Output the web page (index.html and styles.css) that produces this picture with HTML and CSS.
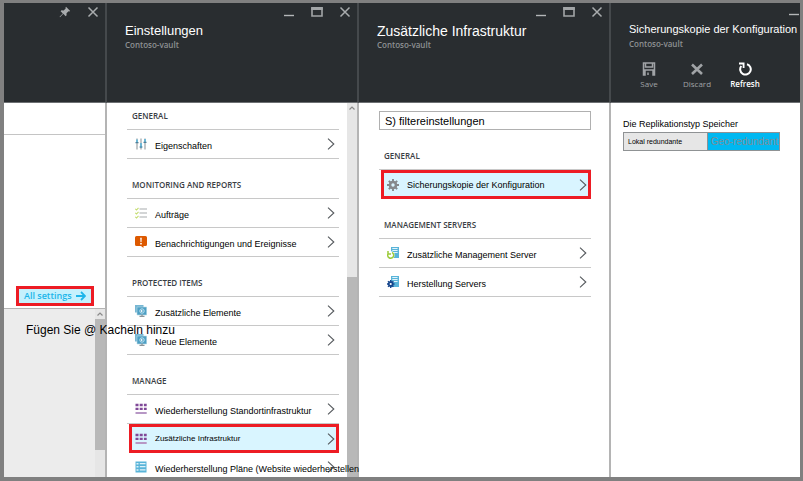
FILE: index.html
```html
<!DOCTYPE html>
<html lang="de">
<head>
<meta charset="utf-8">
<title>Contoso-vault</title>
<link rel="stylesheet" href="styles.css">
</head>
<body>
<svg class="defs" aria-hidden="true">
  <symbol id="close" viewBox="0 0 12 12"><path d="M1.500 1.500l9 9M10.500 1.500l-9 9" fill="none" stroke="#a9acae" stroke-width="1.500"/></symbol>
  <symbol id="min" viewBox="0 0 12 12"><path d="M1 9.500h10" stroke="#b4b6b8" stroke-width="1.400"/></symbol>
  <symbol id="max" viewBox="0 0 12 12"><path d="M1 2h10v8H1z" fill="none" stroke="#a2a5a7" stroke-width="1.600"/><path d="M.2 1h11.600v3H.2z" fill="#a2a5a7"/></symbol>
  <symbol id="pin" viewBox="0 0 12 12"><path d="M7 .8l4.200 4.200-1 .5-.7-.2-2 2 .1 2-.9.9-2.400-2.400L1 11.200l-.4-.4 3.200-3.400L1.600 5.200l.9-.9 2.200.2 2-2-.2-.8z" fill="#a9acae"/></symbol>
  <symbol id="chev" viewBox="0 0 8 12"><path d="M1 .7L6.800 6 1 11.300" fill="none" stroke="#55595d" stroke-width="1.100"/></symbol>
  <symbol id="up" viewBox="0 0 10 10"><path d="M2.500 6.500L5 4l2.500 2.500" fill="none" stroke="#8a8a8a" stroke-width="1.200"/></symbol>
  <symbol id="sliders" viewBox="0 0 12 12"><path d="M2 .5v11M6 .5v11M10 .5v11" stroke="#a3a9ad" stroke-width="1.300"/><path d="M2 1.500v3M6 5v5M10 1v3" stroke="#59b4d9" stroke-width="1.600"/><path d="M.5 4.700h3M4.500 9h3M8.500 4.300h3" stroke="#4d7f99" stroke-width="1.200"/></symbol>
  <symbol id="tasks" viewBox="0 0 12 12"><path d="M4.500 2H12M4.500 6H12M4.500 10H12" stroke="#a8abad" stroke-width="1.100"/><path d="M.3 1.800l1.200 1.200L3.500.8M.3 5.800L1.500 7l2-2.200M.3 9.800L1.500 11l2-2.200" fill="none" stroke="#c3dc6c" stroke-width="1.100"/></symbol>
  <symbol id="alert" viewBox="0 0 12 12"><path d="M1.500 0h9Q12 0 12 1.500v7Q12 10 10.500 10H8.500v2l-2.500-2H1.500Q0 10 0 8.500v-7Q0 0 1.500 0z" fill="#dd5900"/><path d="M5.200 1.800h1.600L6.500 6h-1z" fill="#fff"/><circle cx="6" cy="7.700" r=".9" fill="#fff"/></symbol>
  <symbol id="screens" viewBox="0 0 12 12"><path d="M0 0h8.500v7.500H0z" fill="#77b7d3"/><path d="M2 2h9.700v8H2z" fill="#4d9fc4" stroke="#b9dbe8" stroke-width=".6"/><path d="M4.500 11.500h5M7 9.500v2" stroke="#8b9499" stroke-width="1.300"/><circle cx="7" cy="6" r="2.200" fill="none" stroke="#bfe2f0"/><path d="M6 4.800l2 1.200-2 1.300z" fill="#fff"/></symbol>
  <symbol id="blocks" viewBox="0 0 12 12"><path d="M.5.8h3v2.400h-3zM4.700.8h3v2.400h-3zM8.900.8h2.800v2.400H8.900zM.5 4.700h3v2.400h-3zM4.700 4.700h3v2.400h-3zM8.900 4.700h2.800v2.400H8.900z" fill="#804998"/><path d="M.5 9h11.200v2H.5z" fill="#b797c5"/></symbol>
  <symbol id="plan" viewBox="0 0 12 12"><path d="M.5.500h11v11H.5z" fill="#59b4d9"/><path d="M1.500 2h2v1.500h-2zM1.500 5h2v1.500h-2zM1.500 8.300h2v1.500h-2zM4.800 2h5.700v1.300H4.800zM4.800 5h5.700v1.300H4.800zM4.800 8.300h5.700v1.300H4.800z" fill="#dff2f9"/></symbol>
  <symbol id="gear" viewBox="0 0 12 12"><circle cx="6" cy="6" r="3" fill="none" stroke="#85898c" stroke-width="2.600"/><path d="M6 0v2.500M6 9.500V12M0 6h2.500M9.500 6H12M1.800 1.800l1.700 1.700M8.500 8.500l1.700 1.700M1.800 10.200l1.700-1.700M8.500 3.500l1.700-1.700" stroke="#85898c" stroke-width="1.900"/></symbol>
  <symbol id="server" viewBox="0 0 12 12"><path d="M4 0h8v11H4z" fill="#59b4d9"/><path d="M5.300 1.500h5.300M5.300 3.500h5.300M5.300 5.500h5.300" stroke="#e2f4fb" stroke-width="1"/></symbol>
</svg>
<main class="portal">
  <section class="blade blade-vault">
    <header class="blade-head">
      <div class="window">
        <button type="button" aria-label="Anheften"><svg><use href="#pin"/></svg></button>
        <button type="button" aria-label="Schließen"><svg><use href="#close"/></svg></button>
      </div>
    </header>
    <div class="vault-summary">
      <div class="vault-strip"></div>
      <a class="all-settings" href="#settings">All settings
        <svg viewBox="0 0 10 10"><path d="M0 5h9M5 1l4 4-4 4" fill="none" stroke="#1cb5ea" stroke-width="1.800"/></svg>
      </a>
    </div>
    <div class="vault-tiles">
      <p>Fügen Sie @ Kacheln hinzu</p>
      <div class="scroll scroll-tiles"><svg><use href="#up"/></svg><i></i></div>
    </div>
  </section>

  <section class="blade blade-settings" id="settings">
    <header class="blade-head">
      <div class="window">
        <button type="button" aria-label="Minimieren"><svg><use href="#min"/></svg></button>
        <button type="button" aria-label="Maximieren"><svg><use href="#max"/></svg></button>
        <button type="button" aria-label="Schließen"><svg><use href="#close"/></svg></button>
      </div>
      <h1>Einstellungen</h1>
      <p>Contoso-vault</p>
    </header>
    <div class="blade-body">
      <nav class="menu">
        <h2>GENERAL</h2>
        <a href="#"><svg><use href="#sliders"/></svg><span>Eigenschaften</span><svg class="chev"><use href="#chev"/></svg></a>
        <h2>MONITORING AND REPORTS</h2>
        <a href="#"><svg><use href="#tasks"/></svg><span>Aufträge</span><svg class="chev"><use href="#chev"/></svg></a>
        <a href="#"><svg><use href="#alert"/></svg><span>Benachrichtigungen und Ereignisse</span><svg class="chev"><use href="#chev"/></svg></a>
        <h2>PROTECTED ITEMS</h2>
        <a href="#"><svg><use href="#screens"/></svg><span>Zusätzliche Elemente</span><svg class="chev"><use href="#chev"/></svg></a>
        <a href="#"><svg><use href="#screens"/></svg><span>Neue Elemente</span><svg class="chev"><use href="#chev"/></svg></a>
        <h2>MANAGE</h2>
        <a href="#"><svg><use href="#blocks"/></svg><span>Wiederherstellung Standortinfrastruktur</span><svg class="chev"><use href="#chev"/></svg></a>
        <a href="#" class="selected small"><svg><use href="#blocks"/></svg><span>Zusätzliche Infrastruktur</span><svg class="chev"><use href="#chev"/></svg></a>
        <a href="#"><svg><use href="#plan"/></svg><span>Wiederherstellung Pläne (Website wiederherstellen</span><svg class="chev"><use href="#chev"/></svg></a>
      </nav>
      <div class="scroll scroll-settings"><svg><use href="#up"/></svg><i></i></div>
    </div>
  </section>

  <section class="blade blade-infra">
    <header class="blade-head">
      <div class="window">
        <button type="button" aria-label="Minimieren"><svg><use href="#min"/></svg></button>
        <button type="button" aria-label="Maximieren"><svg><use href="#max"/></svg></button>
        <button type="button" aria-label="Schließen"><svg><use href="#close"/></svg></button>
      </div>
      <h1>Zusätzliche Infrastruktur</h1>
      <p>Contoso-vault</p>
    </header>
    <div class="blade-body infra">
      <input class="filter" type="text" value="S) filtereinstellungen" aria-label="Filtereinstellungen">
      <nav class="menu">
        <h2>GENERAL</h2>
        <a href="#" class="selected"><svg><use href="#gear"/></svg><span>Sicherungskopie der Konfiguration</span><svg class="chev"><use href="#chev"/></svg></a>
        <h2>MANAGEMENT SERVERS</h2>
        <a href="#"><svg viewBox="0 0 12 12"><use href="#server"/><circle cx="3.800" cy="8" r="3.800" fill="#fff"/><path d="M1.200 6.500A3 3 0 1 0 5 5.500M1 4v3h3" fill="none" stroke="#9ccb3b" stroke-width="1.500"/></svg><span>Zusätzliche Management Server</span><svg class="chev"><use href="#chev"/></svg></a>
        <a href="#"><svg viewBox="0 0 12 12"><use href="#server"/><circle cx="3.700" cy="8" r="2" fill="#fff" stroke="#16458c" stroke-width="1.800"/><path d="M3.700 4v1.500M3.700 10.500V12M0 8h1.200M6.200 8h1.300M1 5.300l1 1M5.400 9.700l1 1M1 10.700l1-1M5.400 6.300l1-1" stroke="#16458c" stroke-width="1.400"/></svg><span>Herstellung Servers</span><svg class="chev"><use href="#chev"/></svg></a>
      </nav>
    </div>
  </section>

  <section class="blade blade-config">
    <header class="blade-head">
      <div class="window">
        <button type="button" aria-label="Minimieren"><svg><use href="#min"/></svg></button>
      </div>
      <h1>Sicherungskopie der Konfiguration</h1>
      <p>Contoso-vault</p>
      <div class="commands">
        <button type="button"><svg viewBox="0 0 14 14"><path d="M1.500 1h11v12h-1.500V8H3v5H1.500zM3.500 1v4h7V1M6 10.500v2.500" fill="none" stroke="#a0a3a6" stroke-width="1.500"/></svg>Save</button>
        <button type="button"><svg viewBox="0 0 14 14"><path d="M2 2.500l10 9.500M12 2.500L2 12" stroke="#a0a3a6" stroke-width="2.600"/></svg>Discard</button>
        <button type="button" class="on"><svg viewBox="0 0 14 14"><path d="M9 2.200A5.300 5.300 0 1 1 3.300 4" fill="none" stroke="#fff" stroke-width="2"/><path d="M1 1.500h4.600v4.600" fill="none" stroke="#fff" stroke-width="1.800"/></svg>Refresh</button>
      </div>
    </header>
    <div class="replication" role="group" aria-labelledby="rep">
      <div id="rep">Die Replikationstyp Speicher</div>
      <div class="toggle"><button type="button">Lokal redundante</button><button type="button" class="active" aria-pressed="true">Geo-redundant</button></div>
    </div>
  </section>
</main>
</body>
</html>
```
FILE: styles.css
```css
* { box-sizing: border-box; }
body { margin: 0; font-family: "Liberation Sans", Arial, sans-serif; font-size: 9px; color: #000; }
h1, h2, p { margin: 0; font-weight: 400; }
a { color: inherit; text-decoration: none; }
button { margin: 0; padding: 0; border: 0; background: none; font: inherit; color: inherit; }
svg { display: block; flex: none; width: 12px; height: 12px; }
.defs { display: none; }

.portal {
  display: grid;
  grid-template-columns: 103fr 252fr 252fr 189fr;
  height: 100vh;
  border: solid #808080;
  border-width: 3px 3px 4px 4px;
  overflow: hidden;
  background: #fff;
}
.blade {
  position: relative;
  display: flex;
  flex-direction: column;
  min-width: 0;
  min-height: 0;
  border-right: 2px solid #b4b4b4;
}
.blade-vault { z-index: 2; }
.blade-settings { z-index: 1; }
.blade-config { border-right: 0; }

.blade-head {
  flex: none;
  height: 100px;
  margin-right: -2px;
  padding-left: 18px;
  border-right: 2px solid #45494c;
  border-bottom: 1px solid #6d7073;
  background: #292d30;
  color: #fff;
}
.window { display: flex; justify-content: flex-end; gap: 16px; height: 18px; padding-right: 6px; }
.blade-head h1 { font-size: 13px; line-height: 20px; white-space: nowrap; }
.blade-head p { font: 600 8px/8px "Open Sans", sans-serif; color: #8e9193; }
.blade-infra h1 { font-size: 14px; }
.blade-config .blade-head { margin-right: 0; border-right: 0; }
.blade-config .window { height: 16px; padding-right: 0; }
.blade-config h1 { font-size: 11px; }
.blade-config p { padding-top: 1px; }
.commands { display: flex; margin-top: 14px; }
.commands button { display: flex; flex-direction: column; align-items: center; gap: 3px; width: 48px; margin-left: -4px; margin-right: 4px; font: 8px/10px "Open Sans", sans-serif; color: #a0a3a6; }
.commands svg { width: 14px; height: 14px; }
.commands .on { color: #fff; font-weight: 600; }

.vault-summary { display: flex; flex-direction: column; justify-content: space-between; height: 206px; border-bottom: 1px solid #b4b4b4; }
.vault-strip { height: 32px; border-bottom: 1px solid #c4c4c4; }
.all-settings {
  display: flex;
  align-items: center;
  gap: 4px;
  align-self: flex-start;
  height: 20px;
  margin: 0 12px 2px;
  padding: 0 5px;
  border: 3px solid #ed1c24;
  background: #c5f1fd;
  font: 600 9px/14px "Open Sans", sans-serif;
  color: #1cb5ea;
  white-space: nowrap;
}
.all-settings svg { width: 10px; height: 10px; }
.vault-tiles { flex: 1; display: flex; justify-content: space-between; min-height: 0; background: #ececec; }
.vault-tiles p { width: 0; padding: 13px 0 0 22px; font-size: 12px; line-height: 16px; white-space: nowrap; z-index: 1; }

.scroll { flex: none; width: 10px; background: #e6e6e6; }
.scroll svg { width: 10px; height: 10px; }
.scroll i { display: block; background: #b8b8b8; }
.scroll-tiles i { height: calc(84% - 10px); }
.scroll-settings { display: flex; flex-direction: column; justify-content: space-between; }
.scroll-settings i { height: 200px; }

.blade-body { flex: 1; display: flex; min-height: 0; }
.menu { flex: 1; min-width: 0; padding: 0 8px 0 20px; }
.menu h2 {
  display: flex;
  align-items: flex-end;
  height: 40px;
  padding: 0 5px 7px;
  border-bottom: 1px solid #c8c8c8;
  font: 600 8px/12px "Open Sans", sans-serif;
  color: #3a3e44;
}
.blade-settings h2:first-child { height: 27px; }
.menu a { display: flex; align-items: center; gap: 8px; height: 29px; padding: 0 4px 0 8px; border-bottom: 1px solid #c8c8c8; }
.menu span { flex: 1; min-width: 0; padding-top: 3px; white-space: nowrap; z-index: 1; }
.menu .chev { width: 8px; }
.menu .selected { border: 3px solid #ed1c24; margin-left: 2px; padding: 0 1px 0 3px; background: #d9f5ff; }
.menu .selected span { padding-top: 0; }
.menu .small { font-size: 8px; }

.infra { flex-direction: column; padding-top: 8px; }
.filter { flex: none; height: 19px; margin: 0 18px 0 20px; padding: 0 5px; border: 1px solid #b0b0b0; font: 11px/16px "Liberation Sans", sans-serif; color: #000; }
.infra .menu { padding-right: 18px; }

.replication { padding: 14px 20px 0 12px; }
.replication > div:first-child { line-height: 15px; }
.toggle { display: flex; border: 1px solid #8f9294; height: 19px; }
.toggle button { flex: 84 0 0; padding-left: 4px; text-align: left; white-space: nowrap; background: #e6e6e6; font-size: 7px; }
.toggle .active { flex: 73 0 0; padding-left: 3px; border-left: 1px solid #8f9294; background: #00b8f1; color: #7d8e96; font-size: 10px; }
```
